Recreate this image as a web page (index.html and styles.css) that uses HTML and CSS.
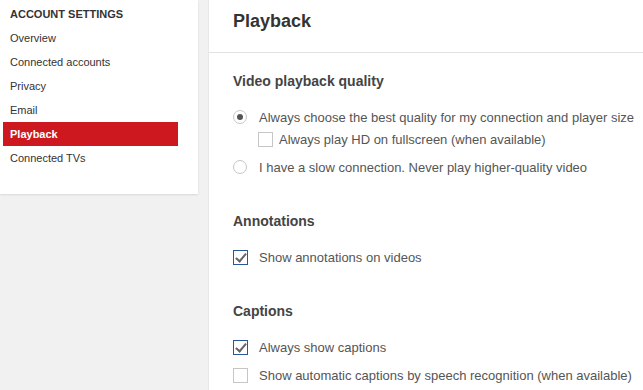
FILE: index.html
```html
<!DOCTYPE html>
<html lang="en">
<head>
  <meta charset="UTF-8">
  <title>Playback settings</title>
  <link rel="stylesheet" href="styles.css">
</head>
<body>
  <div class="page">
    <div class="sidebar">
      <div class="sidebar-title">ACCOUNT SETTINGS</div>
      <ul class="nav">
        <li><a href="#">Overview</a></li>
        <li><a href="#">Connected accounts</a></li>
        <li><a href="#">Privacy</a></li>
        <li><a href="#">Email</a></li>
        <li class="active"><a href="#">Playback</a></li>
        <li><a href="#">Connected TVs</a></li>
      </ul>
    </div>

    <div class="main">
      <div class="main-header">
        <h1>Playback</h1>
      </div>
      <div class="main-content">
        <div class="section">
          <h2>Video playback quality</h2>
          <div class="option">
            <span class="radio checked"></span>
            <span class="label">Always choose the best quality for my connection and player size</span>
          </div>
          <div class="option sub">
            <span class="checkbox"></span>
            <span class="label">Always play HD on fullscreen (when available)</span>
          </div>
          <div class="option">
            <span class="radio"></span>
            <span class="label">I have a slow connection. Never play higher-quality video</span>
          </div>
        </div>

        <div class="section">
          <h2>Annotations</h2>
          <div class="option">
            <span class="checkbox checked"></span>
            <span class="label">Show annotations on videos</span>
          </div>
        </div>

        <div class="section">
          <h2>Captions</h2>
          <div class="option">
            <span class="checkbox checked"></span>
            <span class="label">Always show captions</span>
          </div>
          <div class="option">
            <span class="checkbox"></span>
            <span class="label">Show automatic captions by speech recognition (when available)</span>
          </div>
        </div>
      </div>
    </div>
  </div>
</body>
</html>
```

FILE: styles.css
```css
* {
  box-sizing: border-box;
}

body {
  margin: 0;
  padding: 0;
  font-family: 'Liberation Sans', Arial, sans-serif;
  background: #f1f1f1;
  height: 390px;
  overflow: hidden;
}

.page {
  display: flex;
  align-items: flex-start;
  height: 100%;
}

.sidebar {
  width: 198px;
  flex-shrink: 0;
  background: #fff;
  box-shadow: 0 1px 2px rgba(0, 0, 0, 0.1);
  padding: 2px 0 24px;
}

.sidebar-title {
  font-size: 11px;
  font-weight: bold;
  color: #333;
  line-height: 24px;
  padding-left: 10px;
}

.nav {
  list-style: none;
  margin: 0;
  padding: 0 20px 0 3px;
}

.nav li a {
  display: block;
  font-size: 11px;
  line-height: 24px;
  padding-left: 7px;
  color: #333;
  text-decoration: none;
}

.nav li.active a {
  background: #cc181e;
  color: #fff;
  font-weight: bold;
}

.main {
  flex: 1;
  min-width: 0;
  height: 100%;
  margin-left: 10px;
  background: #fff;
  border-left: 1px solid #e8e8e8;
  overflow: hidden;
}

.main-header {
  height: 53px;
  border-bottom: 1px solid #e2e2e2;
  padding-left: 24px;
  display: flex;
  align-items: center;
}

.main-header h1 {
  margin: 0 0 10px;
  font-size: 18px;
  font-weight: bold;
  color: #333;
}

.main-content {
  padding: 18px 0 0 24px;
}

.section {
  margin-bottom: 33px;
}

.section h2 {
  margin: 0 0 15px;
  font-size: 14px;
  line-height: 20px;
  font-weight: bold;
  color: #444;
}

.option {
  display: flex;
  align-items: center;
  height: 22px;
  margin-top: 6px;
  white-space: nowrap;
}

.section h2 + .option,
.option.sub {
  margin-top: 0;
}

.option.sub {
  padding-left: 25px;
}

.label {
  font-size: 13px;
  color: #555;
}

.radio {
  width: 14px;
  height: 14px;
  border: 1px solid #c6c6c6;
  border-radius: 50%;
  margin-right: 12px;
  flex-shrink: 0;
  display: flex;
  align-items: center;
  justify-content: center;
}

.radio.checked::after {
  content: '';
  width: 6px;
  height: 6px;
  border-radius: 50%;
  background: #555;
}

.checkbox {
  width: 15px;
  height: 15px;
  border: 1px solid #c6c6c6;
  margin-right: 11px;
  flex-shrink: 0;
  position: relative;
}

.option.sub .checkbox {
  margin-right: 6px;
}

.checkbox.checked {
  border-color: #2b5797;
}

.checkbox.checked::after {
  content: '';
  position: absolute;
  left: 4px;
  top: 0px;
  width: 4px;
  height: 9px;
  border: solid #666;
  border-width: 0 2px 2px 0;
  transform: rotate(40deg);
}
```
